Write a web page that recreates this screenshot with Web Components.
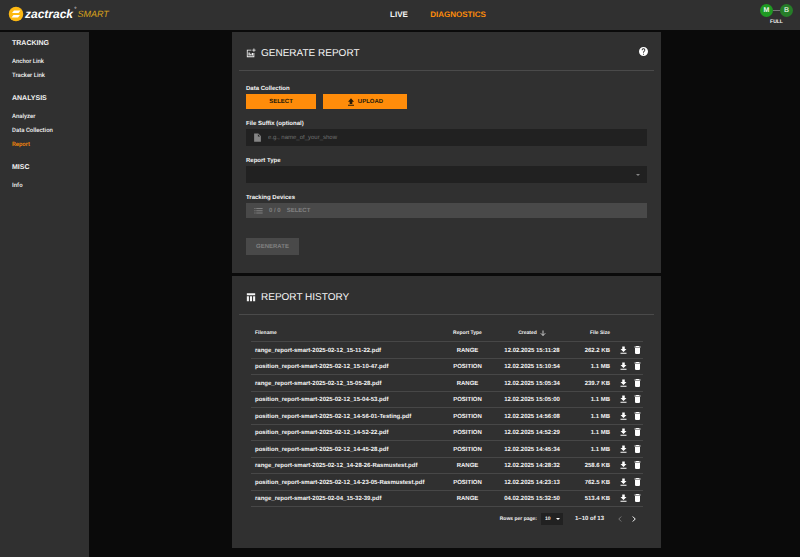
<!DOCTYPE html>
<html lang="en">
<head>
<meta charset="utf-8">
<title>zactrack SMART - Report</title>
<style>
    :root {
        --bg: #0a0a0a;
        --panel: #303030;
        --field: #212121;
        --muted: #494949;
        --line: #4a4a4a;
        --accent: #ff8c0a;
    }
    body {
        margin: 0;
        background: var(--bg);
        color: #f4f4f4;
        font: 6px/10px "Liberation Sans", Arial, sans-serif;
        text-rendering: geometricPrecision;
    }
</style>
</head>
<body>
<zt-app>
    <zt-header slot="header"></zt-header>
    <zt-sidebar slot="sidebar"></zt-sidebar>
    <zt-card heading="GENERATE REPORT">
        <svg slot="icon" width="10" height="10" viewBox="0 0 24 24" fill="#f4f4f4"><path d="M2 4h11v2H4v14h14v-8h2v10H2zM6 11h3v7H6zm4 3h3v4h-3zm4-2h3v6h-3zM18 1h2v3h3v2h-3v3h-2V6h-3V4h3z"/></svg>
        <zt-help slot="action"></zt-help>
        <zt-report-form></zt-report-form>
    </zt-card>
    <zt-card heading="REPORT HISTORY">
        <svg slot="icon" width="10" height="10" viewBox="0 0 24 24" fill="#f4f4f4"><path d="M2 3h20v5H2zM2 10h5v12H2zM9.500 10h5v12h-5zM17 10h5v12h-5z"/></svg>
        <zt-report-history></zt-report-history>
    </zt-card>
</zt-app>

<script>
// Shared base: put the markup of the class in an open shadow root
class ZtElement extends HTMLElement {
    constructor() {
        super();
        this.attachShadow({ mode: 'open' });
    }

    connectedCallback() {
        this.shadowRoot.innerHTML = `
            <style>
                * { box-sizing: border-box; }
                button, input, select { font: inherit; color: inherit; border: 0; margin: 0; padding: 0; border-radius: 0; text-rendering: inherit; }
                button { cursor: pointer; background: none; }
                a { color: inherit; text-decoration: none; }
                svg { display: block; flex: none; }
            </style>
            ${this.template()}`;
    }
}

class ZtApp extends ZtElement {
    template() {
        return `
            <style>
                :host { display: grid; grid-template: auto 1fr / 89px 1fr; gap: 2px 4px; min-height: 100vh; }
                header { grid-column: 1 / -1; }
                aside { background: var(--panel); }
                main { display: flex; flex-direction: column; gap: 3px; width: 100%; max-width: 429px; margin: 0 auto; padding-bottom: 8px; }
            </style>
            <header><slot name="header"></slot></header>
            <aside><slot name="sidebar"></slot></aside>
            <main><slot></slot></main>`;
    }
}

class ZtHeader extends ZtElement {
    template() {
        return `
            <style>
                :host { display: grid; grid-template-columns: 1fr auto 1fr; align-items: center; height: 30px; padding: 0 7px 0 8px; background: var(--panel); }
                .logo { display: flex; align-items: center; gap: 1px; padding-bottom: 2px; font-size: 12px; font-style: italic; }
                .logo b { color: #fff; }
                .logo sup { align-self: flex-start; padding-top: 1px; font-size: 6px; line-height: 6px; }
                .logo span { color: #d9a21b; font-size: 9px; }
                nav { display: grid; grid-template-columns: 59px 59px; padding-left: 56px; font-size: 8px; font-weight: bold; text-align: center; }
                .active { color: var(--accent); }
                .status { justify-self: end; display: grid; justify-items: center; gap: 3px; padding-bottom: 1px; font-size: 5px; line-height: 5px; font-weight: bold; }
                .nodes { display: flex; align-items: center; }
                .nodes i { width: 7px; height: 1px; background: #777; }
                .node { width: 13px; height: 13px; border-radius: 50%; background: #1f9a22; font-size: 7px; line-height: 13px; text-align: center; }
                .node.backup { background: #267d28; color: #cfe3cf; }
            </style>
            <a class="logo" href="#">
                <svg width="16" height="16" viewBox="0 0 32 32"><circle cx="16" cy="16" r="14.500" fill="#fdb913"/><path d="M12 9h13l-4 5H8zM11 18h13l-4 5H7z" fill="#fff"/></svg>
                <b>zactrack</b><sup>&deg;</sup><span>SMART</span>
            </a>
            <nav><a href="#live">LIVE</a><a class="active" href="#diagnostics">DIAGNOSTICS</a></nav>
            <div class="status">
                <div class="nodes"><span class="node">M</span><i></i><span class="node backup">B</span></div>
                <span>FULL</span>
            </div>`;
    }
}

class ZtSidebar extends ZtElement {
    template() {
        const groups = [
            ['TRACKING', ['Anchor Link', 'Tracker Link']],
            ['ANALYSIS', ['Analyzer', 'Data Collection', 'Report']],
            ['MISC', ['Info']]
        ];
        return `
            <style>
                :host { display: block; padding: 7px 12px; }
                nav { display: grid; gap: 13px; }
                h2 { margin: 0 0 8px; font-size: 7px; line-height: 10px; }
                ul { display: grid; gap: 4px; margin: 0; padding: 0; list-style: none; font-weight: 500; font-family: Roboto, sans-serif; }
                .active { color: var(--accent); }
            </style>
            <nav>
                ${groups.map(([title, links]) => `
                    <section>
                        <h2>${title}</h2>
                        <ul>${links.map(link => `<li><a href="#"${link === 'Report' ? ' class="active"' : ''}>${link}</a></li>`).join('')}</ul>
                    </section>`).join('')}
            </nav>`;
    }
}

class ZtCard extends ZtElement {
    template() {
        return `
            <style>
                :host { display: block; background: var(--panel); }
                header { display: flex; align-items: center; gap: 5px; height: 39px; margin: 0 7px; padding: 4px 6px 0 7px; border-bottom: 1px solid var(--line); }
                h1 { flex: 1; margin: 0; padding-top: 2px; font-size: 10px; line-height: 12px; font-weight: normal; }
                ::slotted([slot="action"]) { padding-bottom: 4px; }
            </style>
            <header>
                <slot name="icon"></slot>
                <h1>${this.getAttribute('heading')}</h1>
                <slot name="action"></slot>
            </header>
            <slot></slot>`;
    }
}

class ZtHelp extends ZtElement {
    template() {
        return `
            <style>:host, button { display: block; }</style>
            <button type="button" aria-label="Help">
                <svg width="9" height="9" viewBox="2 2 20 20" fill="#fff"><path d="M12 2a10 10 0 1 0 0 20 10 10 0 0 0 0-20zm1 17h-2v-2h2zm2.070-7.750-.9.920C13.450 12.900 13 13.500 13 15h-2v-.5c0-1.100.45-2.100 1.170-2.830l1.240-1.260A2 2 0 1 0 10 9H8a4 4 0 1 1 7.070 2.250z"/></svg>
            </button>`;
    }
}

class ZtReportForm extends ZtElement {
    template() {
        return `
            <style>
                :host { display: block; padding: 12px 14px 18px; }
                form { display: grid; gap: 9px; }
                label, .label { display: block; height: 11px; line-height: 12px; }
                label, .label, button { font-weight: bold; }
                .buttons { display: flex; gap: 7px; }
                button { display: flex; align-items: center; justify-content: center; height: 15px; }
                .primary { width: 70px; background: var(--accent); color: #2a1b08; }
                .primary + .primary { width: 84px; gap: 3px; }
                .field { display: flex; align-items: center; gap: 6px; height: 17px; padding: 0 7px; background: var(--field); }
                input, select { flex: 1; min-width: 0; height: 100%; background: none; outline: 0; appearance: none; }
                input::placeholder { color: #707070; opacity: 1; }
                button:disabled { background: var(--muted); color: #808080; cursor: default; }
                .devices { width: 100%; justify-content: flex-start; gap: 6px; padding: 0 8px; }
                .generate { justify-self: start; height: 17px; margin-top: 11px; padding: 0 10px; }
            </style>
            <form>
                <div role="group" aria-labelledby="collection">
                    <span class="label" id="collection">Data Collection</span>
                    <div class="buttons">
                        <button class="primary" type="button">SELECT</button>
                        <button class="primary" type="button">
                            <svg width="8" height="8" viewBox="0 0 24 24" fill="#2a1b08"><path d="M12 1l9 10h-5v7H8v-7H3zM3 20h18v3H3z"/></svg>UPLOAD
                        </button>
                    </div>
                </div>
                <div>
                    <label for="suffix">File Suffix (optional)</label>
                    <div class="field">
                        <svg width="9" height="9" viewBox="0 0 24 24" fill="#858585"><path d="M3 1h11l7 7v15H3zM13 3v6h6z" fill-rule="evenodd"/></svg>
                        <input id="suffix" type="text" placeholder="e.g., name_of_your_show">
                    </div>
                </div>
                <div>
                    <label for="type">Report Type</label>
                    <div class="field">
                        <select id="type"><option></option></select>
                        <svg width="4" height="2" viewBox="0 0 10 5" fill="#858585"><path d="M0 0h10L5 5z"/></svg>
                    </div>
                </div>
                <div>
                    <label for="devices">Tracking Devices</label>
                    <button id="devices" class="devices" type="button" disabled>
                        <svg width="9" height="9" viewBox="0 0 24 24" fill="#808080"><path d="M1 5h3v3H1zM6 5h17v3H6zM1 11h3v3H1zM6 11h17v3H6zM1 17h3v3H1zM6 17h17v3H6z"/></svg>
                        <span>0 / 0</span><span>SELECT</span>
                    </button>
                </div>
                <button class="generate" disabled>GENERATE</button>
            </form>`;
    }
}

class ZtReportHistory extends ZtElement {
    template() {
        const reports = [
            ['range_report-smart-2025-02-12_15-11-22.pdf', 'RANGE', '12.02.2025 15:11:28', '262.2 KB'],
            ['position_report-smart-2025-02-12_15-10-47.pdf', 'POSITION', '12.02.2025 15:10:54', '1.1 MB'],
            ['range_report-smart-2025-02-12_15-05-28.pdf', 'RANGE', '12.02.2025 15:05:34', '239.7 KB'],
            ['position_report-smart-2025-02-12_15-04-53.pdf', 'POSITION', '12.02.2025 15:05:00', '1.1 MB'],
            ['position_report-smart-2025-02-12_14-56-01-Testing.pdf', 'POSITION', '12.02.2025 14:56:08', '1.1 MB'],
            ['position_report-smart-2025-02-12_14-52-22.pdf', 'POSITION', '12.02.2025 14:52:29', '1.1 MB'],
            ['position_report-smart-2025-02-12_14-45-28.pdf', 'POSITION', '12.02.2025 14:45:34', '1.1 MB'],
            ['range_report-smart-2025-02-12_14-28-26-Rasmustest.pdf', 'RANGE', '12.02.2025 14:28:32', '258.6 KB'],
            ['position_report-smart-2025-02-12_14-23-05-Rasmustest.pdf', 'POSITION', '12.02.2025 14:23:13', '762.5 KB'],
            ['range_report-smart-2025-02-04_15-32-39.pdf', 'RANGE', '04.02.2025 15:32:50', '513.4 KB']
        ];
        return `
            <style>
                :host { display: block; padding: 9px 18px 23px 19px; }
                table { width: 100%; height: 183px; table-layout: fixed; border-collapse: separate; border-spacing: 0; font-weight: bold; }
                thead tr { height: 18px; font-size: 5px; }
                th, td { padding: 0 4px; border-bottom: 1px solid #474747; text-align: center; white-space: nowrap; }
                td { padding-top: 2px; }
                th:first-child, td:first-child { text-align: left; }
                .type { width: 49px; }
                .created { width: 80px; }
                .size { width: 42px; }
                td.size, th.size { text-align: right; padding-left: 0; }
                td.tools, th.tools { width: 29px; padding: 0 0 0 3px; }
                .created span { display: flex; align-items: center; justify-content: center; gap: 3px; }
                .tools div { display: flex; gap: 2px; }
                .tools button { display: grid; place-items: center; width: 12px; height: 12px; }
                footer { display: flex; align-items: center; justify-content: flex-end; margin-top: 6px; padding-right: 2px; font-weight: bold; font-size: 5px; }
                .pages { display: flex; align-items: center; height: 12px; margin: 0 12px 0 4px; padding-right: 3px; background: var(--field); }
                select { width: 15px; height: 12px; padding-left: 4px; background: none; appearance: none; }
                .step { display: grid; place-items: center; width: 14px; height: 12px; }
                .step:disabled { opacity: .35; }
                .range { margin-right: 9px; font-size: 6px; }
            </style>
            <table>
                <thead>
                    <tr>
                        <th>Filename</th>
                        <th class="type">Report Type</th>
                        <th class="created"><span>Created <svg width="6" height="6" viewBox="0 0 12 12" fill="none" stroke="#f4f4f4" stroke-width="1.500"><path d="M6 1v10M1.500 6.500L6 11l4.500-4.500"/></svg></span></th>
                        <th class="size">File Size</th>
                        <th class="tools"></th>
                    </tr>
                </thead>
                <tbody>
                    ${reports.map(([name, type, created, size]) => `
                        <tr>
                            <td>${name}</td>
                            <td class="type">${type}</td>
                            <td class="created">${created}</td>
                            <td class="size">${size}</td>
                            <td class="tools"><div>
                                <button type="button" aria-label="Download"><svg width="7" height="8" viewBox="0 0 14 16" fill="#fff"><path d="M4.500 1h5v5H13l-6 6-6-6h3.500zM1 13.500h12v2H1z"/></svg></button>
                                <button type="button" aria-label="Delete"><svg width="7" height="8" viewBox="0 0 14 16" fill="#fff"><path d="M4.500 0h5l1 1H13v2H1V1h2.500zM2 4h10v10.500l-1.500 1.500h-7L2 14.500z"/></svg></button>
                            </div></td>
                        </tr>`).join('')}
                </tbody>
            </table>
            <footer>
                <label for="rows">Rows per page:</label>
                <div class="pages">
                    <select id="rows"><option>10</option></select>
                    <svg width="4" height="2" viewBox="0 0 10 5" fill="#fff"><path d="M0 0h10L5 5z"/></svg>
                </div>
                <span class="range">1&ndash;10 of 13</span>
                <button class="step" type="button" aria-label="Previous page" disabled><svg width="4" height="6" viewBox="0 0 8 12" fill="none" stroke="#fff" stroke-width="2"><path d="M6.500 1L1.500 6l5 5"/></svg></button>
                <button class="step" type="button" aria-label="Next page"><svg width="4" height="6" viewBox="0 0 8 12" fill="none" stroke="#fff" stroke-width="2"><path d="M1.500 1l5 5-5 5"/></svg></button>
            </footer>`;
    }
}

customElements.define('zt-app', ZtApp);
customElements.define('zt-header', ZtHeader);
customElements.define('zt-sidebar', ZtSidebar);
customElements.define('zt-card', ZtCard);
customElements.define('zt-help', ZtHelp);
customElements.define('zt-report-form', ZtReportForm);
customElements.define('zt-report-history', ZtReportHistory);
</script>
</body>
</html>
